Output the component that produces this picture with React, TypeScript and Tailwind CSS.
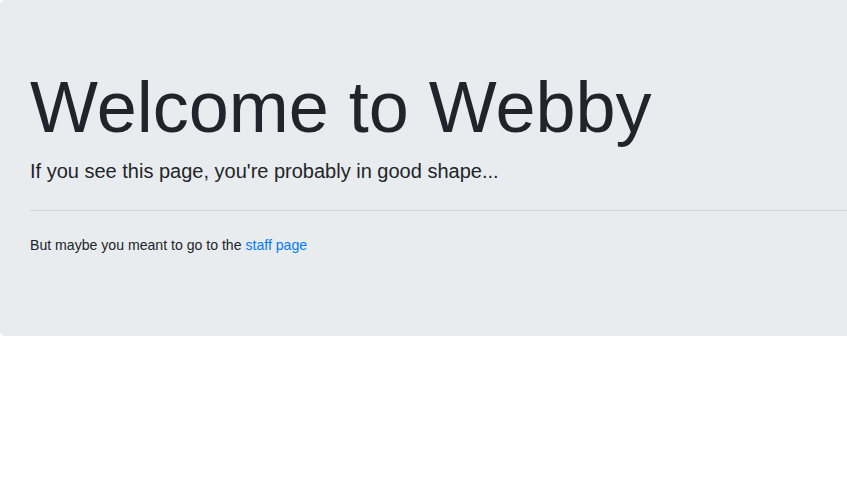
export default function App() {
  return (
    <div className="w-full overflow-hidden" style={{ fontFamily: '"Liberation Sans", Arial, sans-serif' }}>
      <div className="w-[900px] bg-[#e9ecef] rounded-[4.8px] px-[30px] py-16 mb-8 text-[#212529]">
        <h1 className="text-[72px] leading-[1.2] font-light mb-[6px]">Welcome to Webby</h1>
        <p className="text-[20px] leading-[1.5] font-light mb-4">
          If you see this page, you're probably in good shape...
        </p>
        <hr className="my-6 border-0 border-t border-black/10" />
        <p className="text-[14.1px] leading-[21px] mb-4">
          But maybe you meant to go to the{" "}
          <a href="#" className="text-[#007bff]">
            staff page
          </a>
        </p>
      </div>
    </div>
  );
}
